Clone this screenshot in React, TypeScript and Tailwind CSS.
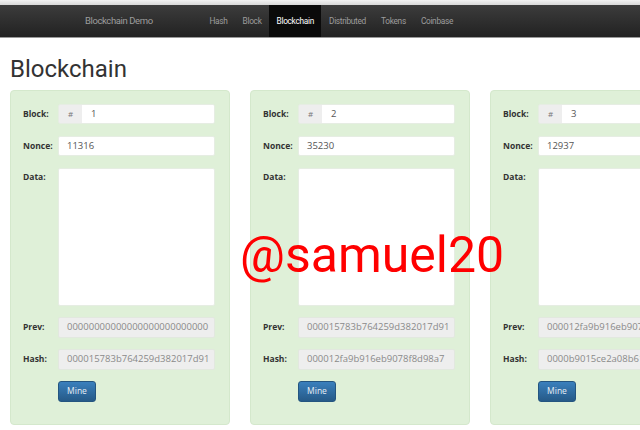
import React from 'react';

// only the part of each hash that fits in the field is shown
const blocks = [
  { n: '1', nonce: '11316', prev: '00000000000000000000000000', hash: '000015783b764259d382017d91' },
  { n: '2', nonce: '35230', prev: '000015783b764259d382017d91', hash: '000012fa9b916eb9078f8d98a7' },
  { n: '3', nonce: '12937', prev: '000012fa9b916eb9078f8d98a7', hash: '0000b9015ce2a08b61216ba5a0' },
];

const navItems = ['Hash', 'Block', 'Blockchain', 'Distributed', 'Tokens', 'Coinbase'];

function Row({ label, children, tall }: { label: string; children: React.ReactNode; tall?: boolean }) {
  return (
    <div className="flex">
      <div className={`w-[35px] shrink-0 text-[8.5px] font-bold text-[#333] ${tall ? 'pt-[3px]' : 'pt-[4px]'}`}>{label}</div>
      <div className="flex-1 min-w-0">{children}</div>
    </div>
  );
}

function BlockCard({ b }: { b: typeof blocks[number] }) {
  return (
    <div className="w-[220px] shrink-0 bg-[#dff0d8] border border-[#d4e8cc] rounded-[4px] pt-[13px] pb-[22px] pl-[12px] pr-[14px] flex flex-col gap-[12px]">
      <Row label="Block:">
        <div className="flex h-[20px] rounded-[2px] overflow-hidden border border-[#e6ede3]">
          <div className="w-[23px] bg-[#eeeeee] text-[#777] text-[8px] flex items-center justify-center">#</div>
          <div className="flex-1 bg-white text-[#555] text-[9.5px] flex items-center pl-[9px]">{b.n}</div>
        </div>
      </Row>
      <Row label="Nonce:">
        <div className="h-[20px] bg-white rounded-[2px] border border-[#e6ede3] text-[#555] text-[9.5px] flex items-center pl-[8px]">{b.nonce}</div>
      </Row>
      <Row label="Data:" tall>
        <div className="h-[138px] bg-white rounded-[2px] border border-[#e6ede3]" />
      </Row>
      <div className="flex flex-col gap-[11px] -mt-[1px]">
        <Row label="Prev:">
          <div className="h-[21px] bg-[#eeeeee] rounded-[2px] border border-[#e2e8df] text-[#8a8a8a] text-[9.5px] flex items-center pl-[8px] whitespace-nowrap">{b.prev}</div>
        </Row>
        <Row label="Hash:">
          <div className="h-[21px] bg-[#eeeeee] rounded-[2px] border border-[#e2e8df] text-[#8a8a8a] text-[9.5px] flex items-center pl-[8px] whitespace-nowrap">{b.hash}</div>
        </Row>
        <div className="pl-[35px]">
          <button className="w-[38px] h-[21px] rounded-[3px] border border-[#245580] bg-gradient-to-b from-[#3a80bd] to-[#265a88] text-[8.5px] text-[#e8eef5] flex items-center justify-center">Mine</button>
        </div>
      </div>
    </div>
  );
}

export default function App() {
  return (
    <div className="relative w-[640px] h-[430px] overflow-hidden bg-white" style={{ fontFamily: '"Open Sans", "Liberation Sans", sans-serif' }}>
      {/* Navbar */}
      <div className="h-[5px] bg-gradient-to-b from-[#f2f2f2] to-[#d8d8d8]" />
      <nav className="h-[33px] bg-gradient-to-b from-[#3c3c3c] to-[#222] border-b border-[#999] flex items-stretch" style={{ fontFamily: 'Roboto, "Liberation Sans", sans-serif' }}>
        <div className="w-[202px] pl-[85px] flex items-center text-[9.5px] text-[#9d9d9d] tracking-[-0.4px]">Blockchain Demo</div>
        <ul className="flex items-stretch">
          {navItems.map((item) => (
            <li
              key={item}
              className={`px-[7.5px] flex items-center text-[8.3px] tracking-[-0.3px] ${item === 'Blockchain' ? 'bg-[#0a0a0a] text-white' : 'text-[#9d9d9d]'}`}
            >
              {item}
            </li>
          ))}
        </ul>
      </nav>

      {/* Title */}
      <h1 className="pl-[10px] pt-[17px] pb-[7px] text-[24px] leading-[28px] font-normal text-[#333]" style={{ fontFamily: 'Roboto, "Liberation Sans", sans-serif' }}>Blockchain</h1>

      {/* Chain */}
      <div className="flex gap-[20px] pl-[10px]">
        {blocks.map((b) => (
          <BlockCard key={b.n} b={b} />
        ))}
      </div>

      {/* Watermark */}
      <div className="absolute left-[240px] top-[230px] text-[#ff0000] text-[50px] leading-none" style={{ fontFamily: 'Roboto, "Liberation Sans", sans-serif' }}>@samuel20</div>
    </div>
  );
}
